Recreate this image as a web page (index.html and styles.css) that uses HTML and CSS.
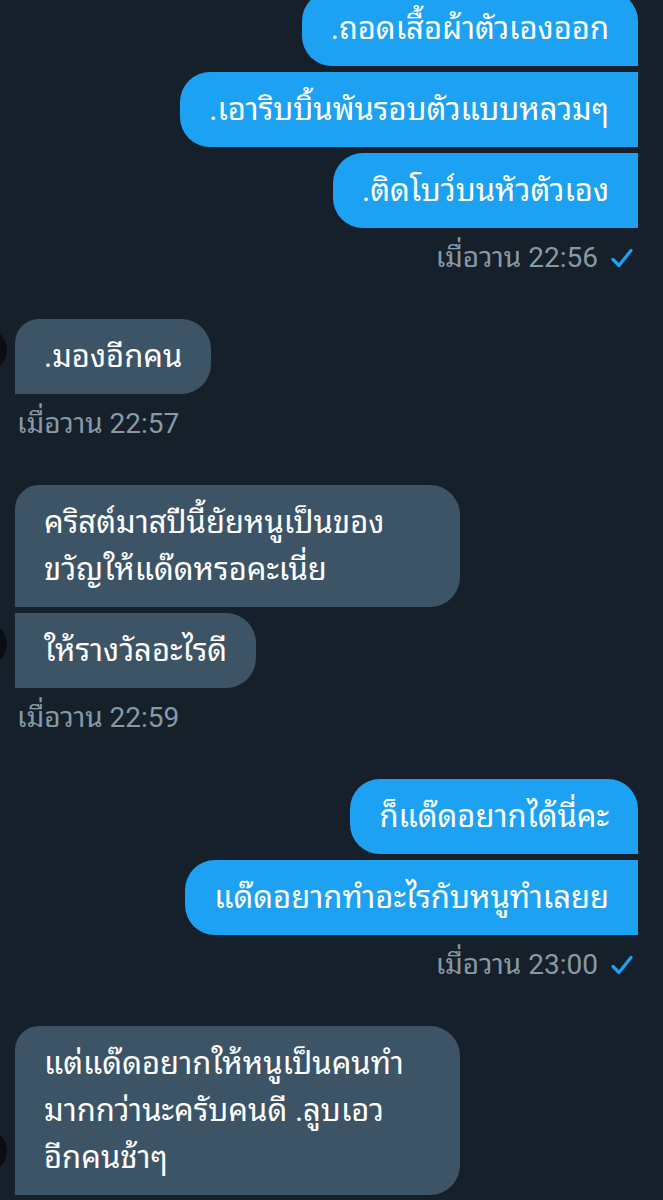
FILE: index.html
```html
<!DOCTYPE html>
<html lang="th">
<head>
<meta charset="utf-8">
<title>DM</title>
<link rel="stylesheet" href="styles.css">
</head>
<body>
<div class="chat">
  <div class="group sent top">
    <div class="bubble first">.ถอดเสื้อผ้าตัวเองออก</div>
    <div class="bubble">.เอาริบบิ้นพันรอบตัวแบบหลวมๆ</div>
    <div class="bubble">.ติดโบว์บนหัวตัวเอง</div>
    <div class="meta">เมื่อวาน 22:56 <svg class="check" viewBox="0 0 24 24"><path d="M3 13.5 L9 19.5 L21 4.5"/></svg></div>
  </div>

  <div class="group recv">
    <div class="row">
      <div class="avatar"></div>
      <div class="stack">
        <div class="bubble first">.มองอีกคน</div>
      </div>
    </div>
    <div class="meta">เมื่อวาน 22:57</div>
  </div>

  <div class="group recv">
    <div class="row">
      <div class="avatar"></div>
      <div class="stack">
        <div class="bubble first full">คริสต์มาสปีนี้ยัยหนูเป็นของ<br>ขวัญให้แด๊ดหรอคะเนี่ย</div>
        <div class="bubble">ให้รางวัลอะไรดี</div>
      </div>
    </div>
    <div class="meta">เมื่อวาน 22:59</div>
  </div>

  <div class="group sent">
    <div class="bubble first">ก็แด๊ดอยากได้นี่คะ</div>
    <div class="bubble">แด๊ดอยากทำอะไรกับหนูทำเลยย</div>
    <div class="meta">เมื่อวาน 23:00 <svg class="check" viewBox="0 0 24 24"><path d="M3 13.5 L9 19.5 L21 4.5"/></svg></div>
  </div>

  <div class="group recv">
    <div class="row">
      <div class="avatar"></div>
      <div class="stack">
        <div class="bubble first full">แต่แด๊ดอยากให้หนูเป็นคนทำ<br>มากกว่านะครับคนดี .ลูบเอว<br>อีกคนช้าๆ</div>
      </div>
    </div>
  </div>
</div>
</body>
</html>
```

FILE: styles.css
```css
html, body {
  margin: 0;
  padding: 0;
  background: #16202b;
}

body {
  font-family: Roboto, "Noto Sans Thai Looped", "Noto Sans Thai", "Noto Sans", sans-serif;
  color: #ffffff;
  overflow: hidden;
}

.chat {
  padding: 0 25px 0 15px;
  display: flex;
  flex-direction: column;
}

.group {
  display: flex;
  flex-direction: column;
  margin-bottom: 44px;
}

.group.top {
  margin-top: -9px;
}

.group.sent {
  align-items: flex-end;
}

.group.recv {
  align-items: flex-start;
}

.bubble {
  font-size: 31px;
  line-height: 47px;
  padding: 14px 29px;
  white-space: nowrap;
  box-sizing: border-box;
}

.sent .bubble {
  background: #1da1f2;
  border-radius: 30px 0 0 30px;
  margin-bottom: 6px;
}

.sent .bubble.first {
  border-radius: 30px 30px 0 30px;
}

.recv .bubble {
  background: #3d5466;
  border-radius: 0 30px 30px 0;
  margin-bottom: 6px;
}

.recv .bubble.first {
  border-radius: 24px 30px 30px 0;
}

.recv .bubble.full {
  width: 445px;
}

.row {
  display: flex;
  align-items: flex-end;
}

.stack {
  display: flex;
  flex-direction: column;
  align-items: flex-start;
}

.avatar {
  width: 44px;
  height: 44px;
  border-radius: 50%;
  background: #0a0e12;
  margin-left: -52px;
  margin-right: 8px;
  margin-bottom: 28px;
  flex: none;
}

.meta {
  font-size: 28px;
  line-height: 34px;
  color: #8899a6;
  margin-top: 7px;
  display: flex;
  align-items: center;
  gap: 12px;
}

.sent .meta {
  margin-right: 4px;
}

.recv .meta {
  margin-left: 2px;
}

.check {
  width: 24px;
  height: 24px;
  fill: none;
  stroke: #1da1f2;
  stroke-width: 3.2;
  stroke-linecap: round;
  stroke-linejoin: round;
}
```
